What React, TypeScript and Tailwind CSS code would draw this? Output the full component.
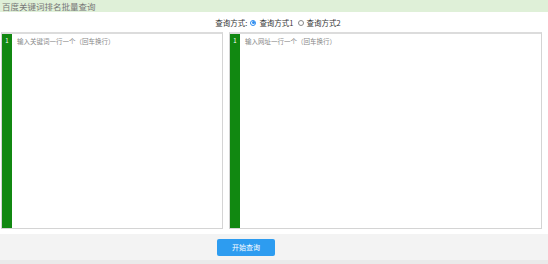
import React from "react";

function Editor({ placeholder, width }: { placeholder: string; width: string }) {
  return (
    <div className={`${width} h-[197px] flex border border-[#d4d4d4] border-t-2 border-t-[#dcdcdc] bg-white`}>
      <div className="w-[10px] bg-[#118811] flex justify-center">
        <span className="text-[6px] leading-none text-white mt-[4px]">1</span>
      </div>
      <div className="flex-1 pl-[5px] pt-[2px] text-[6.5px] leading-[10px] text-[#888]">{placeholder}</div>
    </div>
  );
}

export default function App() {
  return (
    <div
      className="w-[548px] h-[264px] bg-white overflow-hidden flex flex-col"
      style={{ fontFamily: '"Noto Sans CJK SC", "Noto Sans", sans-serif' }}
    >
      <div className="h-[12px] bg-[#dff0d8] flex items-center pl-[2px]">
        <span className="text-[8.5px] leading-[11px] text-[#777]">百度关键词排名批量查询</span>
      </div>
      <div className="h-[20px] flex items-center justify-center pl-[8px] pt-[1px] text-[7.5px] text-[#333] gap-[3px]">
        <span>查询方式:</span>
        <span className="w-[6px] h-[6px] rounded-full border border-[#2d8cf0] flex items-center justify-center">
          <span className="w-[3px] h-[3px] rounded-full bg-[#2d8cf0]" />
        </span>
        <span>查询方式1</span>
        <span className="w-[6px] h-[6px] rounded-full border border-[#888] ml-[1px]" />
        <span>查询方式2</span>
      </div>
      <div className="flex gap-[6px] pl-[1px]">
        <Editor width="w-[222px]" placeholder="输入关键词一行一个（回车换行）" />
        <Editor width="w-[313px]" placeholder="输入网址一行一个（回车换行）" />
      </div>
      <div className="mt-[5px] h-[26px] bg-[#f3f3f3] flex items-center pl-[217px]">
        <button className="w-[58px] h-[17px] rounded-[2px] bg-[#2d9cf0] text-white text-[7px]">
          开始查询
        </button>
      </div>
      <div className="flex-1 bg-[#eaeaea]" />
    </div>
  );
}
